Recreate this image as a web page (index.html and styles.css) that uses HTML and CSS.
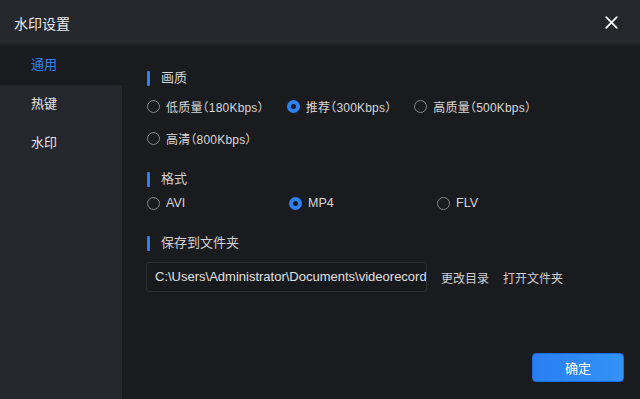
FILE: index.html
```html
<!DOCTYPE html>
<html lang="zh-CN">
<head>
<meta charset="utf-8">
<title>水印设置</title>
<link rel="stylesheet" href="styles.css">
</head>
<body>
<div class="dialog">
  <header class="titlebar">
    <span class="title">水印设置</span>
    <svg class="close" width="13" height="13" viewBox="0 0 13 13"><path d="M1.2 1.2 L11.8 11.8 M11.8 1.2 L1.2 11.8" stroke="#fff" stroke-width="1.7" stroke-linecap="round"/></svg>
  </header>
  <div class="body">
    <nav class="sidebar">
      <div class="nav-item active">通用</div>
      <div class="nav-item">热键</div>
      <div class="nav-item">水印</div>
      <div class="nav-fill"></div>
    </nav>
    <main class="main">
      <div class="section-title first">画质</div>
      <div class="options quality">
        <label class="opt"><span class="radio"></span>低质量（180Kbps）</label>
        <label class="opt"><span class="radio checked"></span>推荐（300Kbps）</label>
        <label class="opt"><span class="radio"></span>高质量（500Kbps）</label>
        <label class="opt"><span class="radio"></span>高清（800Kbps）</label>
      </div>
      <div class="section-title second">格式</div>
      <div class="options format">
        <label class="opt"><span class="radio"></span>AVI</label>
        <label class="opt"><span class="radio checked"></span>MP4</label>
        <label class="opt"><span class="radio"></span>FLV</label>
      </div>
      <div class="section-title third">保存到文件夹</div>
      <div class="path-row">
        <div class="path-input">C:\Users\Administrator\Documents\videorecord_</div>
        <span class="link">更改目录</span>
        <span class="link">打开文件夹</span>
      </div>
      <div class="footer">
        <button class="ok">确定</button>
      </div>
    </main>
  </div>
</div>
</body>
</html>
```

FILE: styles.css
```css
* { box-sizing: border-box; }
html, body { margin: 0; padding: 0; }
body {
  width: 640px;
  height: 399px;
  overflow: hidden;
  background: #1a1b1f;
  font-family: "Liberation Sans", "Noto Sans CJK SC", sans-serif;
  color: #d6d6d6;
}
.dialog {
  width: 640px;
  height: 399px;
  display: flex;
  flex-direction: column;
}
.titlebar {
  height: 46px;
  flex: none;
  background: #25272d;
  border-bottom: 2px solid #1d1f23;
  display: flex;
  align-items: center;
  justify-content: space-between;
  padding: 0 22px 0 14px;
}
.title {
  font-size: 14px;
  color: #ececec;
  line-height: 20px;
  padding-top: 3px;
}
.close { display: block; }
.body {
  flex: 1;
  display: flex;
  min-height: 0;
}
.sidebar {
  width: 122px;
  flex: none;
  display: flex;
  flex-direction: column;
}
.nav-item {
  height: 39px;
  line-height: 37px;
  padding-left: 31px;
  font-size: 13px;
  color: #e4e4e4;
  background: #24272e;
}
.nav-item.active {
  background: #1a1b1f;
  color: #3183f0;
}
.nav-fill {
  flex: 1;
  background: #24272e;
}
.main {
  flex: 1;
  display: flex;
  flex-direction: column;
  padding: 24px 17px 17px 25px;
  background: #1a1b1f;
}
.section-title {
  height: 16px;
  line-height: 16px;
  font-size: 13px;
  color: #d2d2d2;
  display: flex;
  align-items: center;
  gap: 11px;
}
.section-title::before {
  content: "";
  width: 3px;
  height: 15px;
  background: #2f7ff0;
  border-radius: 1px;
}
.section-title.second { margin-top: 23px; }
.section-title.third { margin-top: 22px; }
.options {
  display: flex;
  flex-wrap: wrap;
  font-size: 12px;
  color: #d8d8d8;
  font-feature-settings: "halt" 1;
}
.quality {
  margin-top: 10px;
  column-gap: 23px;
  row-gap: 12px;
}
.quality .opt { letter-spacing: 0.2px; }
.format {
  margin-top: 6px;
  font-size: 12.5px;
}
.format .opt:nth-child(1) { width: 142px; }
.format .opt:nth-child(2) { width: 148px; }
.opt {
  height: 20px;
  display: flex;
  align-items: center;
  gap: 6px;
  white-space: nowrap;
}
.radio {
  width: 13px;
  height: 13px;
  border-radius: 50%;
  border: 1.5px solid #85878b;
  flex: none;
}
.radio.checked {
  border: 4px solid #2f80ef;
  background: #1a1b1f;
}
.path-row {
  margin-top: 11px;
  margin-left: -1px;
  display: flex;
  align-items: center;
}
.path-input {
  width: 281px;
  height: 30px;
  line-height: 28px;
  border: 1px solid #2c2e34;
  border-radius: 3px;
  background: #18191d;
  padding-left: 8px;
  font-size: 13px;
  color: #e2e2e2;
  white-space: nowrap;
  overflow: hidden;
  flex: none;
  margin-right: 14px;
}
.link {
  font-size: 12px;
  color: #cfcfcf;
  margin-right: 14px;
  white-space: nowrap;
}
.footer {
  margin-top: auto;
  display: flex;
  justify-content: flex-end;
}
.ok {
  width: 92px;
  height: 29px;
  border: 1px solid #1d6ee0;
  border-radius: 4px;
  background: linear-gradient(90deg, #2a7ef2, #3293f6);
  color: #fff;
  font-family: inherit;
  font-size: 13px;
  padding: 0;
  margin-right: -1px;
}
```
